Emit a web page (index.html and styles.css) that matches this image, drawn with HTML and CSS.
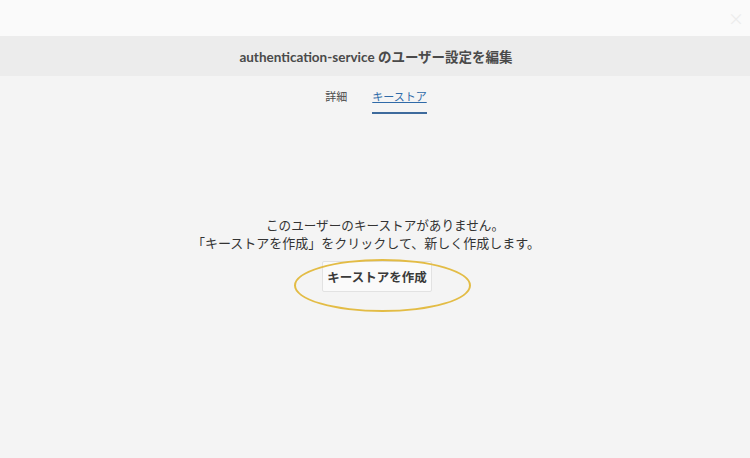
FILE: index.html
```html
<!DOCTYPE html>
<html lang="ja">
<head>
    <meta charset="UTF-8">
    <meta name="viewport" content="width=device-width, initial-scale=1.0">
    <title>ユーザー設定を編集</title>
    <link rel="stylesheet" href="styles.css">
</head>
<body>
    <div class="top-bar">
        <span class="close-btn">×</span>
    </div>

    <header class="page-header">
        <h1>authentication-service のユーザー設定を編集</h1>
    </header>

    <nav class="tabs">
        <a class="tab" href="#">詳細</a>
        <a class="tab active" href="#">キーストア</a>
    </nav>

    <main class="content">
        <p class="empty-msg first">このユーザーのキーストアがありません。</p>
        <p class="empty-msg second">「キーストアを作成」をクリックして、新しく作成します。</p>
        <div class="action">
            <button class="btn-create">キーストアを作成</button>
            <span class="highlight"></span>
        </div>
    </main>
</body>
</html>
```

FILE: styles.css
```css
* {
    margin: 0;
    padding: 0;
    box-sizing: border-box;
}

body {
    font-family: "Noto Sans CJK JP", "Noto Sans", sans-serif;
    background-color: #f4f4f4;
    color: #333;
    min-height: 100vh;
}

/* Barra superior */
.top-bar {
    height: 36px;
    background-color: #fafafa;
    display: flex;
    justify-content: flex-end;
    align-items: center;
    padding-right: 6px;
}

.close-btn {
    color: #ececec;
    font-size: 16px;
    line-height: 1;
}

/* Cabeçalho */
.page-header {
    height: 40px;
    background-color: #ececec;
    display: flex;
    justify-content: center;
    align-items: center;
}

.page-header h1 {
    font-family: "Lato", "Noto Sans CJK JP", sans-serif;
    font-size: 13.5px;
    font-weight: 700;
    color: #4a4a4a;
    padding-left: 2px;
}

/* Abas */
.tabs {
    display: flex;
    justify-content: center;
    gap: 25px;
    padding-top: 11px;
    padding-left: 2px;
}

.tab {
    font-size: 11px;
    color: #4a4a4a;
    text-decoration: none;
    padding-bottom: 7px;
    border-bottom: 2px solid transparent;
    line-height: 18px;
}

.tab.active {
    color: #2f6aa8;
    text-decoration: underline;
    border-bottom-color: #3d6a9c;
}

/* Conteúdo */
.content {
    display: flex;
    flex-direction: column;
    align-items: center;
    padding-top: 102px;
}

.empty-msg {
    font-size: 13px;
    line-height: 18px;
    color: #333;
}

.empty-msg.first {
    font-size: 12.6px;
    margin-left: 20px;
}

.empty-msg.second {
    margin-right: 18px;
}

.action {
    position: relative;
    margin-top: 9px;
    margin-left: 4px;
}

.btn-create {
    font-family: inherit;
    font-size: 12.5px;
    font-weight: 700;
    color: #3a3a3a;
    background-color: #fafafa;
    border: 1px solid #e2e2e2;
    border-radius: 2px;
    white-space: nowrap;
    height: 31px;
    width: 110px;
}

/* Destaque amarelo por cima do botão */
.highlight {
    position: absolute;
    left: -28px;
    top: -2px;
    width: 177px;
    height: 53px;
    border: 2px solid #e3bc45;
    border-radius: 50%;
    pointer-events: none;
}
```
